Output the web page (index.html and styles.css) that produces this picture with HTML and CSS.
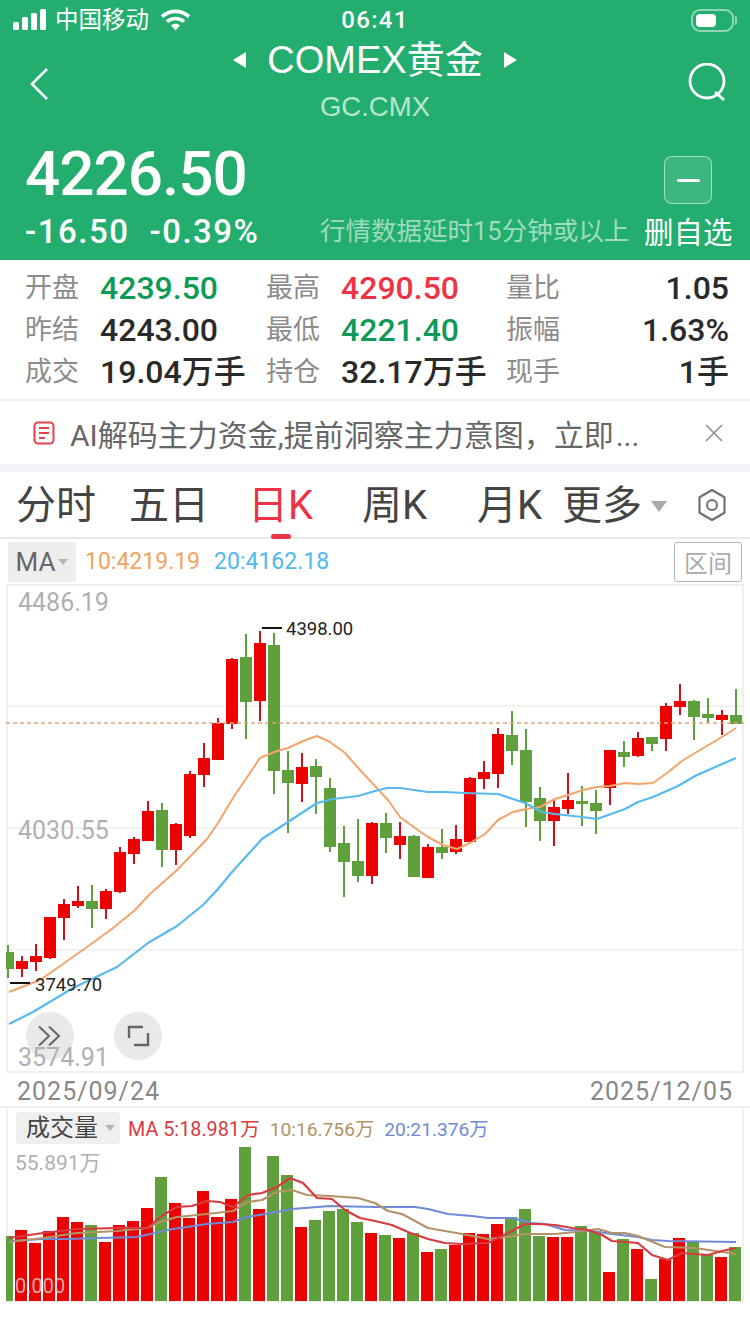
FILE: index.html
```html
<!DOCTYPE html>
<html lang="zh">
<head>
<meta charset="utf-8">
<title>COMEX黄金</title>
<link rel="stylesheet" href="styles.css">
</head>
<body>
<div class="page">
  <header class="hero">
    <div class="status">
      <div class="status-left">
        <svg class="signal" width="34" height="22" viewBox="0 0 34 22"><g fill="#fff"><rect x="0" y="13" width="6" height="8" rx="1.5"/><rect x="9" y="8" width="6" height="13" rx="1.5"/><rect x="18" y="4" width="6" height="17" rx="1.5"/><rect x="27" y="0" width="6" height="21" rx="1.5"/></g></svg>
        <span class="carrier">中国移动</span>
        <svg class="wifi" width="31" height="22" viewBox="0 0 31 22"><g fill="none" stroke="#fff" stroke-width="3.6"><path d="M2 7.600C9.600 .6 21.400 .6 29 7.600"/><path d="M7 12.600C11.800 8.400 19.200 8.400 24 12.600"/></g><path d="M11 16.400c2.600-2.200 6.400-2.200 9 0l-4.500 5z" fill="#fff"/></svg>
      </div>
      <div class="clock">06:41</div>
      <div class="status-right">
        <div class="battery"><div class="battery-fill"></div></div>
      </div>
    </div>
    <div class="nav">
      <svg class="back" width="20" height="34" viewBox="0 0 20 34"><path d="M18 2L3 17l15 15" fill="none" stroke="#fff" stroke-width="2.600"/></svg>
      <div class="nav-center">
        <div class="title-row">
          <span class="tri tri-left"></span>
          <span class="title">COMEX黄金</span>
          <span class="tri tri-right"></span>
        </div>
        <div class="code">GC.CMX</div>
      </div>
      <svg class="search" width="40" height="40" viewBox="0 0 40 40"><circle cx="19" cy="18" r="17" fill="none" stroke="#fff" stroke-width="2.800"/><path d="M27 29l9 8" fill="none" stroke="#fff" stroke-width="2.800"/></svg>
    </div>
    <div class="quote">
      <div class="quote-left">
        <div class="price">4226.50</div>
        <div class="change"><span>-16.50</span><span>-0.39%</span></div>
      </div>
      <div class="delay">行情数据延时15分钟或以上</div>
      <div class="watch">
        <div class="minus-btn"><span class="minus"></span></div>
        <div class="watch-label">删自选</div>
      </div>
    </div>
  </header>

  <section class="stats">
    <div class="stat"><span class="stat-k">开盘</span><span class="stat-v down">4239.50</span></div>
    <div class="stat"><span class="stat-k">最高</span><span class="stat-v up">4290.50</span></div>
    <div class="stat stat-end"><span class="stat-k">量比</span><span class="stat-v">1.05</span></div>
    <div class="stat"><span class="stat-k">昨结</span><span class="stat-v">4243.00</span></div>
    <div class="stat"><span class="stat-k">最低</span><span class="stat-v down">4221.40</span></div>
    <div class="stat stat-end"><span class="stat-k">振幅</span><span class="stat-v">1.63%</span></div>
    <div class="stat"><span class="stat-k">成交</span><span class="stat-v">19.04万手</span></div>
    <div class="stat"><span class="stat-k">持仓</span><span class="stat-v">32.17万手</span></div>
    <div class="stat stat-end"><span class="stat-k">现手</span><span class="stat-v">1手</span></div>
  </section>

  <section class="banner">
    <svg class="doc" width="22" height="24" viewBox="0 0 22 24"><rect x="1.500" y="1.500" width="19" height="21" rx="3.500" fill="none" stroke="#e2434f" stroke-width="2"/><path d="M6 7h10M6 12h10M6 17h6" stroke="#e2434f" stroke-width="2"/></svg>
    <span class="banner-text">AI解码主力资金,提前洞察主力意图，立即<span class="dots">...</span></span>
    <svg class="close" width="18" height="18" viewBox="0 0 18 18"><path d="M1 1l16 16M17 1L1 17" stroke="#8f8f8f" stroke-width="1.600" fill="none"/></svg>
  </section>

  <nav class="tabs">
    <span class="tab">分时</span>
    <span class="tab">五日</span>
    <span class="tab tab-active">日K</span>
    <span class="tab">周K</span>
    <span class="tab">月K</span>
    <span class="tab tab-more">更多<span class="caret caret-lg"></span></span>
    <svg class="hex" width="30" height="34" viewBox="0 0 30 34"><path d="M15 2l12.500 7.200v15.600L15 32 2.500 24.800V9.200z" fill="none" stroke="#707070" stroke-width="2.200" stroke-linejoin="round"/><circle cx="15" cy="17" r="5" fill="none" stroke="#707070" stroke-width="2"/></svg>
  </nav>

  <div class="ma-row">
    <div class="ma-select">MA<span class="caret"></span></div>
    <span class="ma-10">10:4219.19</span>
    <span class="ma-20">20:4162.18</span>
    <div class="range-btn">区间</div>
  </div>

  <section class="price-panel">
    <svg class="kline" width="734" height="485" viewBox="8 586 734 485">
      <path class="grid" d="M8 706H742M8 828H742M8 950H742"/>
      <path class="wick-up" d="M22 956V977M36 944V971M50 917V959M64 899V940M78 886V908M106 889V919M120 847V893M134 837V864M148 801V841M176 823V865M190 771V838M204 743V787M218 718V760M232 658V729M260 631V721M302 753V802M372 822V884M400 822V859M428 844V878M456 825V854M470 777V842M484 761V789M498 728V788M554 800V846M568 773V814M610 750V805M638 732V757M666 703V751M680 684V715M722 710V735"/>
      <path class="wick-down" d="M8 945V978M92 885V928M162 803V867M246 634V739M274 633V794M288 751V833M316 759V814M330 778V852M344 826V897M358 819V882M386 813V853M414 835V877M442 829V859M512 711V765M526 729V827M540 787V841M582 786V826M596 790V834M624 741V767M652 737V751M694 700V740M708 698V723M736 689V724"/>
      <path class="body-up" d="M22 961V969M36 956V962M50 917V958M64 904V918M78 901V906M106 891V909M120 852V892M134 839V854M148 811V841M176 824V850M190 774V836M204 758V775M218 723V760M232 659V724M260 643V701M302 767V784M372 823V876M400 836V845M428 847V878M456 839V852M470 778V842M484 772V779M498 734V774M554 807V821M568 800V809M610 750V788M638 738V756M666 706V739M680 701V707M722 715V720"/>
      <path class="body-down" d="M92 901V909M162 810V850M246 657V702M274 645V771M288 770V783M316 766V777M330 788V847M344 843V862M358 861V876M386 823V838M414 836V877M442 847V853M512 735V751M526 750V802M540 798V821M582 801V804M596 803V811M624 752V757M652 737V744M694 701V717M708 714V718M736 715V724"/>
      <path class="body-down-edge" d="M10 952V969"/>
      <path class="last-line" d="M6 723H744"/>
      <polyline class="ma10" points="9,992 40,980 63,964 87,947 113,928 134,911 150,894 177,870 207,839 218,823 233,798 260,758 277,751 288,748 303,741 317,736 330,742 345,753 360,770 375,786 388,800 400,817 415,828 428,837 443,845 457,849 470,843 485,834 498,820 513,812 526,809 540,807 555,799 568,795 583,790 597,787 610,786 625,783 638,784 653,783 667,773 682,761 695,753 722,737 736,728"/>
      <polyline class="ma20" points="9,1024 33,1012 73,988 117,967 148,943 177,926 203,905 218,889 232,872 262,839 288,822 317,803 333,799 358,796 375,791 387,788 400,788 428,792 445,792 465,793 498,794 525,803 542,812 555,814 582,817 597,819 625,809 638,802 653,797 678,786 695,776 722,764 736,758"/>
      <path class="extreme" d="M262 628H282M10 983H30"/>
    </svg>
    <span class="axis axis-top">4486.19</span>
    <span class="axis axis-mid">4030.55</span>
    <span class="peak peak-high">4398.00</span>
    <span class="peak peak-low">3749.70</span>
    <div class="fab fab-next"><svg width="24" height="22" viewBox="0 0 24 22"><path d="M1 1.500l10 9.500-10 9.500M11 1.500l10 9.500-10 9.500" fill="none" stroke="#666" stroke-width="2"/></svg></div>
    <div class="fab fab-full"><svg width="24" height="22" viewBox="0 0 24 22"><path d="M3 13V2h14M8 20h14V8" fill="none" stroke="#666" stroke-width="2.400"/></svg></div>
    <span class="axis axis-low">3574.91</span>
  </section>

  <div class="dates"><span>2025/09/24</span><span>2025/12/05</span></div>

  <section class="vol-panel">
    <div class="vol-legend">
      <div class="vol-select">成交量<span class="caret"></span></div>
      <span class="vol-5">MA 5:18.981万</span>
      <span class="vol-10">10:16.756万</span>
      <span class="vol-20">20:21.376万</span>
    </div>
    <svg class="vol-chart" width="734" height="154" viewBox="8 1147 734 154">
      <path class="bar-up" d="M21 1230V1301M35 1243V1301M49 1231V1301M63 1217V1301M77 1222V1301M105 1242V1301M119 1225V1301M133 1221V1301M147 1208V1301M175 1203V1301M189 1218V1301M203 1191V1301M217 1217V1301M231 1199V1301M259 1209V1301M301 1227V1301M371 1233V1301M399 1238V1301M427 1252V1301M455 1245V1301M469 1233V1301M483 1234V1301M497 1224V1301M553 1237V1301M567 1237V1301M609 1272V1301M637 1249V1301M665 1259V1301M679 1238V1301M721 1257V1301"/>
      <path class="bar-down" d="M91 1225V1301M161 1177V1301M245 1147V1301M273 1156V1301M287 1175V1301M315 1220V1301M329 1211V1301M343 1209V1301M357 1222V1301M385 1235V1301M413 1233V1301M441 1249V1301M511 1217V1301M525 1209V1301M539 1236V1301M581 1226V1301M595 1231V1301M623 1239V1301M651 1279V1301M693 1242V1301M707 1254V1301M735 1247V1301"/>
      <path class="bar-down-edge" d="M9.500 1236V1301"/>
      <polyline class="vma20" points="9,1241 43,1239 67,1239 100,1238 137,1237 173,1229 207,1224 233,1222 247,1217 277,1212 292,1209 330,1206 375,1207 415,1207 428,1209 448,1214 472,1216 488,1218 512,1218 532,1223 545,1224 565,1230 592,1231 612,1234 638,1237 652,1240 668,1241 736,1242"/>
      <polyline class="vma10" points="9,1242 43,1238 77,1233 117,1231 147,1228 160,1222 177,1217 207,1214 233,1211 247,1202 262,1200 277,1192 292,1190 307,1195 330,1196 358,1198 375,1203 388,1211 402,1214 428,1228 462,1234 488,1239 508,1237 525,1234 555,1234 575,1232 598,1229 612,1233 625,1233 638,1236 665,1247 695,1248 736,1254"/>
      <polyline class="vma5" points="9,1238 43,1233 77,1229 117,1228 147,1228 163,1215 177,1207 192,1206 207,1201 220,1202 233,1207 248,1195 262,1193 277,1187 290,1178 303,1183 317,1198 332,1199 345,1210 360,1218 375,1221 392,1225 408,1232 428,1239 445,1243 462,1244 488,1243 508,1233 525,1224 538,1224 555,1225 572,1228 588,1230 602,1235 612,1241 638,1243 652,1255 668,1260 682,1253 708,1255 722,1251 736,1248"/>
    </svg>
    <span class="vol-axis vol-axis-top">55.891万</span>
    <span class="vol-axis vol-axis-zero">0.000</span>
  </section>
</div>
</body>
</html>
```
FILE: styles.css
```css
* { box-sizing: border-box; }
html, body { margin: 0; padding: 0; background: #fff; }
body { width: 750px; height: 1334px; overflow: hidden; font-family: Roboto, "Noto Sans CJK SC", sans-serif; color: #222; }
.page { width: 750px; }

.hero { height: 260px; background: #23ae6f; color: #fff; padding-top: 8px; }
.status { height: 24px; display: grid; grid-template-columns: 1fr auto 1fr; align-items: center; padding: 0 16px; }
.status-left { display: flex; align-items: center; margin-left: -3px; }
.carrier { font-size: 23.500px; line-height: 24px; margin-left: 8px; }
.wifi { margin-left: 11px; }
.clock { font-size: 24px; letter-spacing: 1.300px; font-weight: 500; line-height: 24px; }
.status-right { display: flex; justify-content: flex-end; }
.battery { position: relative; width: 43px; height: 23px; border: 2px solid rgba(255,255,255,.5); border-radius: 9px; padding: 3px 0 3px 3px; }
.battery::after { content: ""; position: absolute; right: -5px; top: 5px; width: 2px; height: 9px; border-radius: 0 2px 2px 0; background: rgba(255,255,255,.5); }
.battery-fill { width: 20px; height: 13px; background: #fff; border-radius: 4px; }

.nav { display: grid; grid-template-columns: 1fr auto 1fr; height: 90px; padding: 8px 22px 0; }
.back { margin-top: 27px; margin-left: 7px; }
.search { justify-self: end; margin-top: 23px; }
.nav-center { display: flex; flex-direction: column; align-items: center; }
.title-row { display: flex; align-items: center; height: 40px; }
.title { font-family: "Liberation Sans", "Noto Sans CJK SC", sans-serif; font-size: 38px; line-height: 40px; margin: 0 21px; }
.tri { width: 0; height: 0; border-top: 8px solid transparent; border-bottom: 8px solid transparent; }
.tri-left { border-right: 13px solid #fff; }
.tri-right { border-left: 13px solid #fff; }
.code { font-family: "Liberation Sans", sans-serif; font-size: 27.500px; line-height: 30px; margin-top: 12px; color: #b8e6d0; }

.quote { display: flex; align-items: flex-end; padding: 0 17px 7px 25px; height: 138px; }
.quote-left { width: 295px; }
.price { font-size: 62px; line-height: 66px; letter-spacing: -1px; font-weight: 500; }
.change { font-size: 33px; line-height: 42px; margin-top: 4px; letter-spacing: 1.500px; font-weight: 500; display: flex; gap: 20px; }
.delay { font-size: 25.500px; line-height: 36px; color: #9edcbd; margin-bottom: 4px; white-space: nowrap; flex: 0 0 309px; }
.watch { margin-left: 15px; width: 88px; margin-bottom: 2px; display: flex; flex-direction: column; align-items: center; }
.minus-btn { width: 48px; height: 48px; border: 1px solid rgba(255,255,255,.55); background: rgba(255,255,255,.12); border-radius: 8px; display: flex; align-items: center; justify-content: center; margin-bottom: 11px; }
.minus { width: 23px; height: 3px; background: #fff; border-radius: 2px; }
.watch-label { font-size: 29.500px; line-height: 36px; white-space: nowrap; }

.stats { height: 141px; padding: 7px 21px 0 25px; display: grid; grid-template-columns: 241px 240px 1fr; grid-auto-rows: 42px; border-bottom: 2px solid #efefef; }
.stat { display: flex; align-items: center; white-space: nowrap; }
.stat-k { font-size: 27px; line-height: 36px; color: #8c8c8c; width: 75px; flex: none; margin-bottom: 1px; }
.stat-v { font-size: 32px; color: #2a2a2a; line-height: 42px; font-weight: 500; }
.stat-end { justify-content: space-between; }
.up { color: #ee3344; }
.down { color: #0f9a57; }

.banner { height: 63px; display: flex; align-items: center; padding: 0 27px 0 33px; border-bottom: 8px solid #f3f5f8; box-sizing: content-box; }
.banner-text { font-size: 30px; color: #666; margin-left: 15px; white-space: nowrap; flex: 1; }
.dots { margin-left: 2px; }

.tabs { height: 67px; display: grid; grid-template-columns: 113px 119px 114px 115px 85px 135px 30px; align-items: center; padding-left: 16px; border-bottom: 2px solid #e8e8e8; }
.tab { font-size: 40px; color: #444; line-height: 48px; margin-top: 3px; position: relative; white-space: nowrap; }
.tab-active { color: #ee3344; }
.tab-active::after { content: ""; position: absolute; left: 23px; bottom: -9px; width: 20px; height: 5px; border-radius: 3px; background: #ee3344; }
.tab-more { display: flex; align-items: center; }
.hex { justify-self: end; }
.caret { width: 0; height: 0; display: inline-block; border-left: 5px solid transparent; border-right: 5px solid transparent; border-top: 6px solid #b5b5b5; margin-left: 3px; vertical-align: middle; }
.caret-lg { border-left-width: 8px; border-right-width: 8px; border-top-width: 11px; border-top-color: #aaa; margin-left: 9px; }

.ma-row { height: 45px; display: flex; align-items: center; padding: 0 8px; font-size: 23px; }
.ma-select { width: 68px; height: 40px; background: #eee; border-radius: 3px; display: flex; align-items: center; justify-content: center; color: #666; font-size: 26px; margin-right: 9px; }
.ma-10 { color: #f3a261; }
.ma-20 { color: #53b8ec; margin-left: 14px; }
.range-btn { margin-left: auto; width: 68px; height: 40px; border: 1.500px solid #b5b5b5; border-radius: 3px; display: flex; align-items: center; justify-content: center; color: #aaa; font-size: 24px; }

.price-panel { position: relative; margin: 0 6px; height: 489px; border: 2px solid #efefef; }
.kline, .vol-chart { display: block; overflow: visible; }
.grid { stroke: #f2f2f2; stroke-width: 2; fill: none; }
.wick-up { stroke: #cf0f1c; stroke-width: 2; fill: none; }
.wick-down { stroke: #5f9f3c; stroke-width: 2; fill: none; }
.body-up { stroke: #ec0000; stroke-width: 12; fill: none; }
.body-down { stroke: #5f9f3c; stroke-width: 12; fill: none; }
.body-down-edge { stroke: #5f9f3c; stroke-width: 8; fill: none; }
.last-line { stroke: #d9a878; stroke-width: 1.500; stroke-dasharray: 4 3; fill: none; }
.ma10 { stroke: #f3a46a; stroke-width: 2; fill: none; stroke-linejoin: round; }
.ma20 { stroke: #58b9ee; stroke-width: 2.200; fill: none; stroke-linejoin: round; }
.extreme { stroke: #111; stroke-width: 2; fill: none; }

.axis { position: absolute; left: 10px; font-size: 25px; line-height: 26px; color: #b0b0b0; }
.axis-top { top: 4px; }
.axis-mid { top: 232px; }
.axis-low { top: 459px; }
.peak { position: absolute; font-size: 18.500px; line-height: 20px; color: #222; }
.peak-high { left: 278px; top: 33px; }
.peak-low { left: 27px; top: 389px; }
.fab { position: absolute; width: 48px; height: 48px; border-radius: 50%; background: rgba(226,226,226,.75); display: flex; align-items: center; justify-content: center; top: 426px; }
.fab-next { left: 18px; }
.fab-full { left: 106px; }

.dates { height: 35px; padding: 3px 17px 0; display: flex; justify-content: space-between; align-items: center; font-size: 25px; color: #888; letter-spacing: 1px; border-bottom: 2px solid #efefef; }

.vol-panel { position: relative; margin: 0 6px; height: 194px; border-left: 2px solid #efefef; border-right: 2px solid #efefef; border-bottom: 1px solid #efefef; }
.vol-legend { height: 39px; display: flex; align-items: flex-start; padding-top: 4px; font-size: 19.800px; line-height: 32px; white-space: nowrap; }
.vol-select { width: 104px; height: 32px; margin-left: 8px; margin-right: 8px; padding-left: 10px; background: #efefef; border-radius: 4px; font-size: 24px; color: #444; display: flex; align-items: center; }
.vol-select .caret { margin-left: 7px; }
.vol-5 { color: #d83a3f; margin-top: 2px; }
.vol-10 { color: #b39368; margin: 2px 0 0 10px; font-size: 19.200px; }
.vol-20 { color: #6d8ad8; margin: 2px 0 0 10px; font-size: 19.200px; }
.bar-up { stroke: #ec0000; stroke-width: 12; fill: none; }
.bar-down { stroke: #5f9f3c; stroke-width: 12; fill: none; }
.bar-down-edge { stroke: #5f9f3c; stroke-width: 7; fill: none; }
.vma5 { stroke: #d83a3f; stroke-width: 2.200; fill: none; stroke-linejoin: round; }
.vma10 { stroke: #b39368; stroke-width: 2.200; fill: none; stroke-linejoin: round; }
.vma20 { stroke: #6d8ad8; stroke-width: 2.200; fill: none; stroke-linejoin: round; }
.vol-axis { position: absolute; left: 7px; font-size: 21px; line-height: 24px; color: #b0b0b0; }
.vol-axis-top { top: 43px; }
.vol-axis-zero { top: 166px; font-size: 20px; color: rgba(205,205,205,.85); }
```
